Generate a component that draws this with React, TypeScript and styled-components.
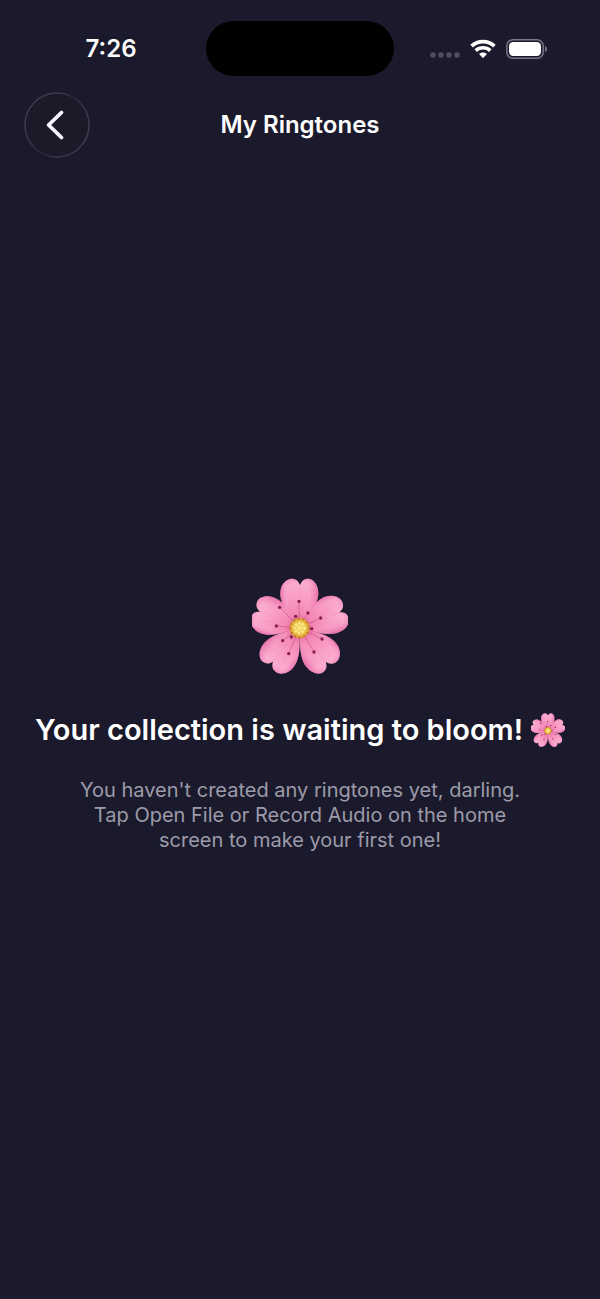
import React from "react";
import styled, { createGlobalStyle } from "styled-components";

const GlobalStyle = createGlobalStyle`
  * {
    box-sizing: border-box;
  }

  body {
    margin: 0;
    background: #1b1a2c;
    color: #fff;
    font-family: Inter, "Liberation Sans", sans-serif;
  }
`;

const Screen = styled.div`
  min-height: 100vh;
  display: flex;
  flex-direction: column;
`;

const StatusBar = styled.div`
  height: 92px;
  padding: 21px 24px 16px;
  display: grid;
  grid-template-columns: 1fr 188px 1fr;
  align-items: center;
`;

const Time = styled.time`
  padding-right: 8px;
  text-align: center;
  font-size: 24px;
  line-height: 28px;
  font-weight: 600;
`;

const Island = styled.div`
  height: 55px;
  border-radius: 28px;
  background: #000;
`;

const StatusIcons = styled.div`
  display: flex;
  align-items: center;
  justify-content: flex-end;
  gap: 10px;
  padding-right: 28px;
`;

const Header = styled.header`
  padding: 0 24px;
  display: grid;
  grid-template-columns: 66px 1fr 66px;
  align-items: center;
`;

const BackButton = styled.button`
  width: 66px;
  height: 66px;
  padding: 0;
  border: 0;
  background: none;
  cursor: pointer;

  svg {
    display: block;
  }
`;

const HeaderTitle = styled.h1`
  margin: 0;
  text-align: center;
  font-size: 24px;
  line-height: 28px;
  font-weight: 600;
`;

const EmptyState = styled.main`
  flex: 1;
  display: flex;
  flex-direction: column;
  align-items: center;
  justify-content: center;
  padding-bottom: 26px;
`;

const FlowerSvg = styled.svg<{ $size: number }>`
  display: block;
  flex: none;
  width: ${({ $size }) => $size}px;
  height: ${({ $size }) => $size}px;
`;

const EmptyTitle = styled.h2`
  margin: 38px 0 30px;
  display: flex;
  align-items: center;
  gap: 8px;
  white-space: nowrap;
  font-size: 29px;
  line-height: 36px;
  font-weight: 600;
`;

const EmptyText = styled.p`
  margin: 0;
  max-width: 460px;
  text-align: center;
  color: #9d9ba9;
  font-size: 20px;
  line-height: 25px;
`;

const PETAL =
  "M0 4C-12 -22 -60 -62 -58 -106C-57 -133 -38 -148 -25 -148C-10 -148 -3 -140 1 -128C5 -140 12 -148 26 -148C39 -148 55 -133 56 -106C57 -62 12 -22 0 4Z";

const PETAL_ANGLES = [142, 218, 68, 292, 0];

const STAMENS = [
  [176, 100],
  [118, 118],
  [203, 135],
  [241, 150],
  [108, 174],
  [127, 218],
  [145, 257],
  [221, 252],
  [245, 213],
  [166, 145],
  [153, 207],
  [214, 182],
];

const Flower: React.FC<{ size: number; id: string }> = ({ size, id }) => (
  <FlowerSvg
    $size={size}
    viewBox="35 30 288 288"
    role="img"
    aria-label="Cherry blossom"
  >
    <defs>
      <radialGradient
        id={`${id}-petal`}
        gradientUnits="userSpaceOnUse"
        cx="0"
        cy="0"
        r="148"
      >
        <stop offset="0.1" stopColor="#d9417e" />
        <stop offset="0.3" stopColor="#ef74a8" />
        <stop offset="0.6" stopColor="#f790bd" />
        <stop offset="0.9" stopColor="#fba4ca" />
        <stop offset="1" stopColor="#f18aba" />
      </radialGradient>
      <linearGradient id={`${id}-shade`} x1="0" y1="0" x2="1" y2="0">
        <stop offset="0" stopColor="#e05c9c" stopOpacity="0.7" />
        <stop offset="0.2" stopColor="#ffc4df" stopOpacity="0.2" />
        <stop offset="0.7" stopColor="#ffc4df" stopOpacity="0.3" />
        <stop offset="1" stopColor="#e05c9c" stopOpacity="0.7" />
      </linearGradient>
      <radialGradient id={`${id}-core`}>
        <stop offset="0" stopColor="#fbe98a" />
        <stop offset="0.6" stopColor="#efc84c" />
        <stop offset="1" stopColor="#d48b36" />
      </radialGradient>
    </defs>
    {PETAL_ANGLES.map((angle) => (
      <g key={angle} transform={`translate(178 180) rotate(${angle})`}>
        <path d={PETAL} fill={`url(#${id}-petal)`} />
        <path d={PETAL} fill={`url(#${id}-shade)`} />
        <path
          d="M1 -126C3 -105 1 -80 0 -50M-24 -120C-20 -95 -10 -70 -6 -50M26 -120C22 -95 12 -70 7 -50"
          fill="none"
          stroke="#f07db2"
          strokeOpacity="0.35"
          strokeWidth="2"
        />
      </g>
    ))}
    {STAMENS.map(([x, y]) => (
      <g key={`${x}-${y}`}>
        <path
          d={`M178 180L${x} ${y}`}
          stroke="#b83a70"
          strokeOpacity="0.7"
          strokeWidth="2"
        />
        <circle cx={x} cy={y} r="5" fill="#8c1d4f" />
      </g>
    ))}
    <circle cx="178" cy="180" r="31" fill={`url(#${id}-core)`} />
    <circle
      cx="178"
      cy="180"
      r="28"
      fill="none"
      stroke="#b96b35"
      strokeWidth="5"
      strokeDasharray="4 10"
    />
    <circle
      cx="178"
      cy="180"
      r="15"
      fill="none"
      stroke="#fff0a0"
      strokeWidth="6"
      strokeDasharray="5 6"
    />
  </FlowerSvg>
);

const SignalIcon = () => (
  <svg width="30" height="20" viewBox="0 0 30 20" aria-hidden="true">
    <g fill="#504e60">
      <circle cx="3" cy="16" r="2.8" />
      <circle cx="11" cy="16" r="2.8" />
      <circle cx="19" cy="16" r="2.8" />
      <circle cx="27" cy="16" r="2.8" />
    </g>
  </svg>
);

const WifiIcon = () => (
  <svg width="26" height="20" viewBox="0 0 26 20" aria-hidden="true">
    <g fill="none" stroke="#fff" strokeWidth="3.7">
      <path d="M1.6 7.2C8 1.1 18 1.1 24.4 7.2" />
      <path d="M5.7 11.6C9.9 7.8 16.1 7.8 20.3 11.6" />
    </g>
    <path
      d="M9.1 15C11.3 13 14.7 13 16.9 15L13.7 18.4Q13 19 12.3 18.4Z"
      fill="#fff"
    />
  </svg>
);

const BatteryIcon = () => (
  <svg width="42" height="20" viewBox="0 0 42 20" aria-hidden="true">
    <rect
      x="0.8"
      y="0.8"
      width="36.4"
      height="18.4"
      rx="6"
      fill="none"
      stroke="#777587"
      strokeWidth="1.5"
    />
    <rect x="3" y="3" width="32" height="14" rx="4.2" fill="#fff" />
    <path d="M39 7C41.8 7.8 41.8 12.2 39 13Z" fill="#777587" />
  </svg>
);

const BackIcon = () => (
  <svg width="66" height="66" viewBox="0 0 66 66" aria-hidden="true">
    <defs>
      <linearGradient id="back-rim" x1="0" y1="0.2" x2="1" y2="0.8">
        <stop offset="0" stopColor="#403e55" />
        <stop offset="0.35" stopColor="#38364b" />
        <stop offset="0.5" stopColor="#29273a" />
        <stop offset="0.65" stopColor="#38364b" />
        <stop offset="1" stopColor="#403e55" />
      </linearGradient>
    </defs>
    <circle
      cx="33"
      cy="33"
      r="32"
      fill="#1b1a28"
      stroke="url(#back-rim)"
      strokeWidth="1.4"
    />
    <path
      d="M37.5 20.5L24.6 33L37.5 45.5"
      fill="none"
      stroke="#f7f5ff"
      strokeWidth="3.8"
      strokeLinecap="round"
      strokeLinejoin="round"
    />
  </svg>
);

const App: React.FC = () => {
  return (
    <>
      <GlobalStyle />
      <Screen>
        <StatusBar>
          <Time>7:26</Time>
          <Island />
          <StatusIcons>
            <SignalIcon />
            <WifiIcon />
            <BatteryIcon />
          </StatusIcons>
        </StatusBar>
        <Header>
          <BackButton type="button" aria-label="Back">
            <BackIcon />
          </BackButton>
          <HeaderTitle>My Ringtones</HeaderTitle>
        </Header>
        <EmptyState>
          <Flower size={96} id="hero" />
          <EmptyTitle>
            Your collection is waiting to bloom!
            <Flower size={34} id="inline" />
          </EmptyTitle>
          <EmptyText>
            You haven't created any ringtones yet, darling. Tap Open File or
            Record Audio on the home screen to make your first one!
          </EmptyText>
        </EmptyState>
      </Screen>
    </>
  );
};

export default App;
